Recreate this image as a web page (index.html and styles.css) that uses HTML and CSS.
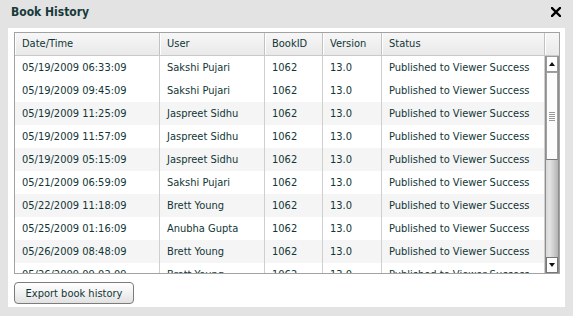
FILE: index.html
```html
<!DOCTYPE html>
<html lang="en">

<head>
    <meta charset="UTF-8">
    <title>Book History</title>
    <link rel="stylesheet" href="styles.css">
</head>

<body>

    <div id="titlebar">
        <h1>Book History</h1>
        <span id="close">
            <svg width="10" height="10" viewBox="0 0 10 10">
                <path d="M1 1 L9 9 M9 1 L1 9" stroke="#000" stroke-width="2.4" stroke-linecap="square" />
            </svg>
        </span>
    </div>

    <div id="panel">
        <div id="grid">
            <div class="head">
                <div class="c1">Date/Time</div>
                <div class="c2">User</div>
                <div class="c3">BookID</div>
                <div class="c4">Version</div>
                <div class="c5">Status</div>
                <div class="cs"></div>
            </div>

            <div class="body">
                <div class="rows">
                    <div class="row selected">
                        <div class="c1">05/19/2009 06:33:09</div><div class="c2">Sakshi Pujari</div><div class="c3">1062</div><div class="c4">13.0</div><div class="c5">Published to Viewer Success</div>
                    </div>
                    <div class="row">
                        <div class="c1">05/19/2009 09:45:09</div><div class="c2">Sakshi Pujari</div><div class="c3">1062</div><div class="c4">13.0</div><div class="c5">Published to Viewer Success</div>
                    </div>
                    <div class="row">
                        <div class="c1">05/19/2009 11:25:09</div><div class="c2">Jaspreet Sidhu</div><div class="c3">1062</div><div class="c4">13.0</div><div class="c5">Published to Viewer Success</div>
                    </div>
                    <div class="row">
                        <div class="c1">05/19/2009 11:57:09</div><div class="c2">Jaspreet Sidhu</div><div class="c3">1062</div><div class="c4">13.0</div><div class="c5">Published to Viewer Success</div>
                    </div>
                    <div class="row">
                        <div class="c1">05/19/2009 05:15:09</div><div class="c2">Jaspreet Sidhu</div><div class="c3">1062</div><div class="c4">13.0</div><div class="c5">Published to Viewer Success</div>
                    </div>
                    <div class="row">
                        <div class="c1">05/21/2009 06:59:09</div><div class="c2">Sakshi Pujari</div><div class="c3">1062</div><div class="c4">13.0</div><div class="c5">Published to Viewer Success</div>
                    </div>
                    <div class="row">
                        <div class="c1">05/22/2009 11:18:09</div><div class="c2">Brett Young</div><div class="c3">1062</div><div class="c4">13.0</div><div class="c5">Published to Viewer Success</div>
                    </div>
                    <div class="row">
                        <div class="c1">05/25/2009 01:16:09</div><div class="c2">Anubha Gupta</div><div class="c3">1062</div><div class="c4">13.0</div><div class="c5">Published to Viewer Success</div>
                    </div>
                    <div class="row">
                        <div class="c1">05/26/2009 08:48:09</div><div class="c2">Brett Young</div><div class="c3">1062</div><div class="c4">13.0</div><div class="c5">Published to Viewer Success</div>
                    </div>
                    <div class="row">
                        <div class="c1">05/26/2009 09:02:09</div><div class="c2">Brett Young</div><div class="c3">1062</div><div class="c4">13.0</div><div class="c5">Published to Viewer Success</div>
                    </div>
                </div>

                <div class="scroll">
                    <div class="btn up"></div>
                    <div class="thumb"><span></span></div>
                    <div class="track"></div>
                    <div class="btn down"></div>
                </div>
            </div>
        </div>

        <button id="export">Export book history</button>
    </div>

</body>

</html>
```

FILE: styles.css
```css
* {
    box-sizing: border-box;
}

body {
    margin: 0;
    width: 573px;
    height: 316px;
    background: #e3e3e3;
    font-family: "DejaVu Sans Condensed", "DejaVu Sans", sans-serif;
    font-size: 11px;
    color: #123636;
    overflow: hidden;
}

#titlebar {
    display: flex;
    align-items: center;
    justify-content: space-between;
    height: 28px;
    padding: 0 12px 4px 11px;
}

h1 {
    margin: 0;
    font-size: 12px;
    font-weight: bold;
    color: #173a3a;
}

#close svg {
    display: block;
}

#panel {
    margin: 0 8px;
    height: 279px;
    background: #fff;
    padding: 4px 5px 0 6px;
}

#grid {
    width: 546px;
    height: 242px;
    border: 1px solid #a2a2a2;
    display: flex;
    flex-direction: column;
    overflow: hidden;
}

.head {
    display: flex;
    height: 23px;
    flex: none;
    background: linear-gradient(#f7f7f7, #e9e9e9);
    border-bottom: 1px solid #c9c9c9;
}

.head > div {
    line-height: 22px;
    border-right: 1px solid #c2c2c2;
    box-shadow: inset 1px 0 0 #fff;
}

.head > .cs {
    border-right: none;
}

.c1, .c2, .c3, .c4, .c5 {
    padding-left: 7px;
    white-space: nowrap;
    overflow: hidden;
}

.c1 { width: 145px; }
.c2 { width: 105px; }
.c3 { width: 58px; }
.c4 { width: 59px; }
.c5 { width: 163px; }
.cs { flex: 1; }

.body {
    flex: 1;
    display: flex;
    min-height: 0;
}

.rows {
    width: 530px;
    overflow: hidden;
}

.row {
    display: flex;
    height: 23px;
    line-height: 23px;
    background: #fff;
}

.row:nth-child(odd) {
    background: #f5f5f5;
}

.row.selected {
    background: #fff;
}

.row > div {
    border-right: 1px solid #cfcfcf;
}

.scroll {
    flex: 1;
    display: flex;
    flex-direction: column;
    border-left: 1px solid #8e8e8e;
    border-right: 1px solid #8e8e8e;
    background: linear-gradient(to right, #d8d8d8, #e4e4e4 30%, #b4b4b4);
}

.btn {
    height: 16px;
    flex: none;
    background: #fff;
    border: 1px solid #9a9a9a;
    display: flex;
    align-items: center;
    justify-content: center;
}

.btn.down {
    border-color: #777;
}

.btn::after {
    content: "";
    border-left: 3px solid transparent;
    border-right: 3px solid transparent;
}

.btn.up::after {
    border-bottom: 4px solid #111;
}

.btn.down::after {
    border-top: 4px solid #111;
}

.thumb {
    height: 88px;
    flex: none;
    background: #fcfcfc;
    border: 1px solid #a0a0a0;
    border-bottom-color: #777;
    display: flex;
    align-items: center;
    justify-content: center;
}

.thumb span {
    display: block;
    width: 6px;
    height: 9px;
    background: repeating-linear-gradient(#9a9a9a 0, #9a9a9a 1px, transparent 1px, transparent 2px);
}

.track {
    flex: 1;
}

#export {
    margin-top: 8px;
    width: 120px;
    height: 22px;
    padding: 0;
    border: 1px solid #7c7c7c;
    border-radius: 4px;
    background: linear-gradient(#ffffff, #f2f2f2 50%, #e1e1e1);
    font-family: "DejaVu Sans Condensed", "DejaVu Sans", sans-serif;
    font-size: 11px;
    color: #123636;
}
```
